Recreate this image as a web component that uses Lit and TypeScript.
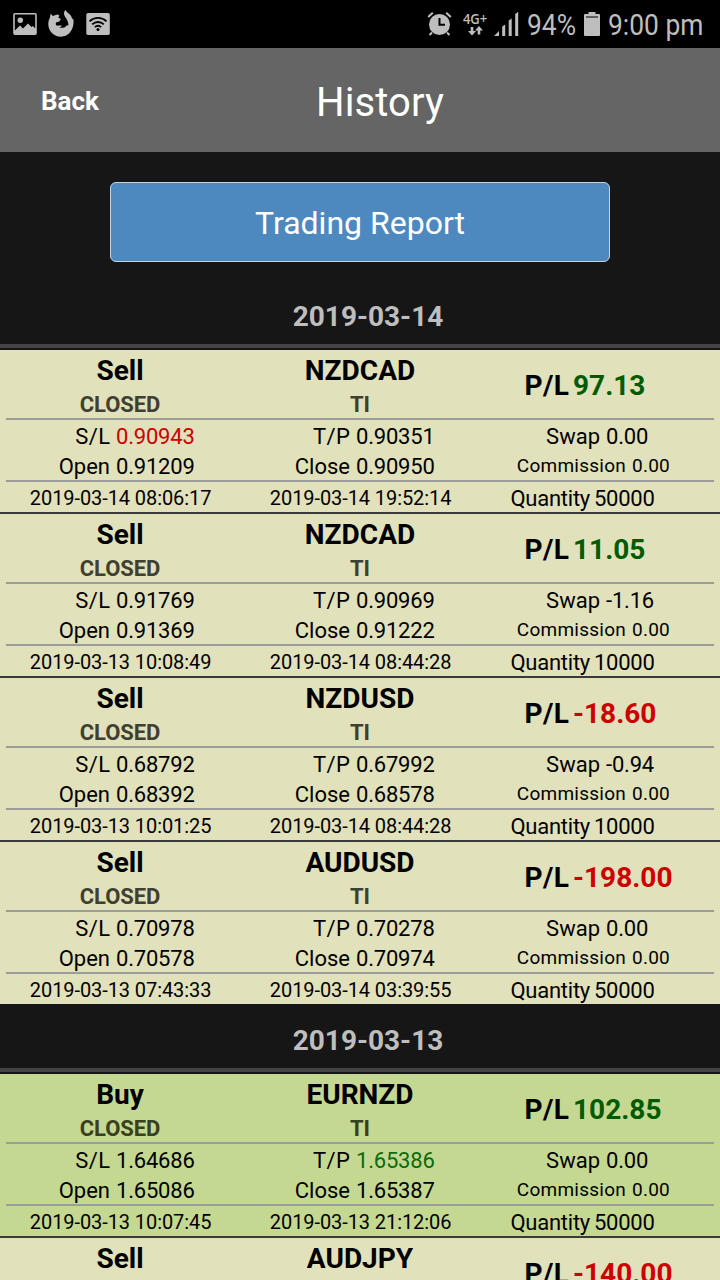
import { LitElement, html, css, nothing } from "lit";
import { customElement, property } from "lit/decorators.js";

interface Trade {
  side: "Sell" | "Buy";
  symbol: string;
  pl: string;
  detail?: {
    sl: string;
    tp: string;
    open: string;
    close: string;
    swap: string;
    opened: string;
    closed: string;
    quantity: string;
    hit?: "sl" | "tp";
  };
}

const DAYS: { date: string; trades: Trade[] }[] = [
  {
    date: "2019-03-14",
    trades: [
      { side: "Sell", symbol: "NZDCAD", pl: "97.13", detail: { sl: "0.90943", tp: "0.90351", open: "0.91209", close: "0.90950", swap: "0.00", opened: "2019-03-14 08:06:17", closed: "2019-03-14 19:52:14", quantity: "50000", hit: "sl" } },
      { side: "Sell", symbol: "NZDCAD", pl: "11.05", detail: { sl: "0.91769", tp: "0.90969", open: "0.91369", close: "0.91222", swap: "-1.16", opened: "2019-03-13 10:08:49", closed: "2019-03-14 08:44:28", quantity: "10000" } },
      { side: "Sell", symbol: "NZDUSD", pl: "-18.60", detail: { sl: "0.68792", tp: "0.67992", open: "0.68392", close: "0.68578", swap: "-0.94", opened: "2019-03-13 10:01:25", closed: "2019-03-14 08:44:28", quantity: "10000" } },
      { side: "Sell", symbol: "AUDUSD", pl: "-198.00", detail: { sl: "0.70978", tp: "0.70278", open: "0.70578", close: "0.70974", swap: "0.00", opened: "2019-03-13 07:43:33", closed: "2019-03-14 03:39:55", quantity: "50000" } },
    ],
  },
  {
    date: "2019-03-13",
    trades: [
      { side: "Buy", symbol: "EURNZD", pl: "102.85", detail: { sl: "1.64686", tp: "1.65386", open: "1.65086", close: "1.65387", swap: "0.00", opened: "2019-03-13 10:07:45", closed: "2019-03-13 21:12:06", quantity: "50000", hit: "tp" } },
      { side: "Sell", symbol: "AUDJPY", pl: "-140.00" },
    ],
  },
];

@customElement("status-bar")
class StatusBar extends LitElement {
  static styles = css`
    :host { display: flex; height: 48px; background: #000; color: #bebebe; align-items: center; padding: 0 16px 0 12px; box-sizing: border-box; }
    svg { display: block; fill: #bebebe; flex: none; }
    .left { display: flex; align-items: center; gap: 11px; flex: 1; }
    .right { display: flex; align-items: center; }
    .alarm { margin-right: 10px; }
    .net { width: 27px; margin-right: 5px; display: flex; flex-direction: column; align-items: center; }
    .gen { font: 600 14px/14px "Open Sans", sans-serif; white-space: nowrap; transform: scaleX(0.93); }
    .txt { font: 400 30px/48px Roboto, sans-serif; white-space: nowrap; padding-top: 1px; }
    .txt span { display: inline-block; transform: scaleX(0.88); transform-origin: 0 50%; }
    .pct { width: 49px; margin: 0 8px 0 8px; }
    .clock { width: 96px; margin-left: 8px; }
  `;
  render() {
    return html`
      <div class="left">
        <svg width="25" height="24" viewBox="0 0 25 24"><path fill-rule="evenodd" d="M3 1h20a1.800 1.800 0 0 1 1.800 1.800v18.400A1.800 1.800 0 0 1 23 23H3a1.800 1.800 0 0 1-1.800-1.800V2.800A1.800 1.800 0 0 1 3 1zM2.800 2.600V18.500L8 13.500l3 3 5-5 3.500 3.500 1.500-1 2.200 2.500V2.600z" /><circle cx="8.300" cy="8.300" r="2.700" /></svg>
        <svg width="27" height="28" viewBox="0 0 27 28"><path d="M2.700 3.500L4.700 6l4.600-1.500 2 .8-.9 2.400 2.500 1.400-1.600 2.500-3.300 1c-.5 1.600 0 2.500 1 3.100 2.500-.5 3.600 0 5-.1-.6 1-1.500 1.500-2.700 1.800 3.500 1.200 6.200-.2 7.600-2.200l1.400.400c.2-2.300-.5-4.600-1.900-6.800-1.400-2.500-2.400-3.500-2.400-5.300 0-1.500.5-2.600 1.600-3.500.6 1.600 1.900 2.600 3.600 3.800 1.500 1.500 2.500 3 3 5.200l.9-.4c.5 1.700.6 3.300.4 5C24.800 21.300 19.600 26.700 13 26.700 5.800 26.700.3 21 .3 14.200c0-2.700.6-4.500 1.500-6.200z" /></svg>
        <svg width="25" height="24" viewBox="0 0 25 24"><rect x="0.300" y="1" width="23.500" height="22" rx="1.800" /><g fill="none" stroke="#000" stroke-width="1.800"><path d="M3.500 9.300a12.500 12.500 0 0 1 17 0" /><path d="M6.200 12.300a8.500 8.500 0 0 1 11.600 0" /><path d="M8.800 15.200a4.800 4.800 0 0 1 6.400 0" /></g><circle cx="12" cy="17.500" r="1.500" fill="#000" /></svg>
      </div>
      <div class="right">
        <svg class="alarm" width="25" height="26" viewBox="0 0 25 26"><circle cx="12.500" cy="13.500" r="10.500" /><path d="M5 21.500L2.500 24M20 21.500l2.500 2.500M1.200 6l4.600-4.300M23.800 6l-4.600-4.300" stroke="#bebebe" stroke-width="2" /><path d="M12.500 7v6.700h5.500" fill="none" stroke="#000" stroke-width="2" /></svg>
        <div class="net">
          <span class="gen">4G+</span>
          <svg width="15" height="10" viewBox="0 0 15 10"><path d="M2.700 1h2.600v4H8L4 9.500 0 5h2.700zM9.700 8.500v-4H7L11 0l4 4.500h-2.700v4z" /></svg>
        </div>
        <svg width="25" height="26" viewBox="0 0 25 26"><path d="M0 25l5-5v5zM8.200 15.500l3-2V25h-3zM14.700 9.500l3-2V25h-3zM21.200 3l3-2.200V25h-3z" /></svg>
        <div class="txt pct"><span>94%</span></div>
        <svg width="16" height="24" viewBox="0 0 16 24"><path fill-rule="evenodd" d="M4.500 0h7v2H15a1 1 0 0 1 1 1v20a1 1 0 0 1-1 1H1a1 1 0 0 1-1-1V3a1 1 0 0 1 1-1h3.500zM2 4.500v1h12v-1z" /></svg>
        <div class="txt clock"><span>9:00 pm</span></div>
      </div>
    `;
  }
}

@customElement("trade-row")
class TradeRow extends LitElement {
  @property({ attribute: false }) trade!: Trade;

  static styles = css`
    :host { display: block; }
    .card { background: #e1e1bc; height: 162px; padding: 0 6px; color: #000; font: 400 22px/30px Roboto, sans-serif; white-space: nowrap; }
    .card.buy { background: #c5d892; }
    .cols { display: grid; grid-template-columns: 234px 240px 234px; box-sizing: border-box; }
    .head { height: 70px; padding-top: 1px; border-bottom: 2px solid #9c9c98; }
    .prices { height: 62px; border-bottom: 2px solid #9c9c98; padding-top: 2px; }
    .foot { height: 30px; padding-top: 1px; }
    .center { text-align: center; }
    .first.center { margin-left: -6px; }
    .big { font-size: 28px; line-height: 40px; font-weight: 700; }
    .sub { font-weight: 700; line-height: 28px; color: #3f3f32; letter-spacing: -0.1px; }
    .buy .sub { color: #384020; }
    .pair { display: grid; grid-template-columns: 110px auto; column-gap: 6px; }
    .pair > :first-child { text-align: right; }
    .num { letter-spacing: -0.2px; }
    .lead { letter-spacing: 0.4px; margin-right: -0.4px; }
    .c1 { grid-template-columns: 104px auto; }
    .p-swap { grid-template-columns: 120px auto; }
    .p-comm { grid-template-columns: 146px auto; font-size: 19px; line-height: 28px; letter-spacing: 0.25px; }
    .p-qty { grid-template-columns: 110px auto; column-gap: 4px; line-height: 32px; letter-spacing: -0.25px; }
    .p-pl { grid-template-columns: 89px auto; column-gap: 4px; font-size: 28px; line-height: 70px; font-weight: 700; }
    .date { font-size: 20px; letter-spacing: -0.08px; }
    .date span { position: relative; left: 0.6px; }
    .red { color: #cc0000; }
    .green { color: #005a00; }
    .mid-green { color: #0a6b0a; }
  `;
  render() {
    const t = this.trade;
    const d = t.detail;
    return html`
      <div class="card ${t.side === "Buy" ? "buy" : ""}">
        <div class="cols head">
          <div class="center first"><div class="big">${t.side}</div>${d ? html`<div class="sub">CLOSED</div>` : nothing}</div>
          <div class="center"><div class="big">${t.symbol}</div>${d ? html`<div class="sub">TI</div>` : nothing}</div>
          <div class="pair p-pl"><span class="lead">P/L</span><span class=${t.pl.startsWith("-") ? "red" : "green"}>${t.pl}</span></div>
        </div>
        ${d
          ? html`
              <div class="cols prices">
                <div>
                  <div class="pair c1"><span class="lead">S/L</span><span class="num ${d.hit === "sl" ? "red" : ""}">${d.sl}</span></div>
                  <div class="pair c1"><span>Open</span><span class="num">${d.open}</span></div>
                </div>
                <div>
                  <div class="pair"><span class="lead">T/P</span><span class="num ${d.hit === "tp" ? "mid-green" : ""}">${d.tp}</span></div>
                  <div class="pair"><span>Close</span><span class="num">${d.close}</span></div>
                </div>
                <div>
                  <div class="pair p-swap"><span>Swap</span><span class="num">${d.swap}</span></div>
                  <div class="pair p-comm"><span>Commission</span><span>0.00</span></div>
                </div>
              </div>
              <div class="cols foot">
                <div class="center first date"><span>${d.opened}</span></div>
                <div class="center date"><span>${d.closed}</span></div>
                <div class="pair p-qty"><span>Quantity</span><span>${d.quantity}</span></div>
              </div>
            `
          : nothing}
      </div>
    `;
  }
}

@customElement("app-root")
class AppRoot extends LitElement {
  static styles = css`
    :host { display: block; height: 1280px; overflow: hidden; background: #161616; font-family: Roboto, sans-serif; }
    .bar { display: grid; grid-template-columns: 140px 1fr 100px; height: 104px; background: #656565; color: #fff; align-items: center; }
    .back { font-size: 26px; font-weight: 700; text-align: center; line-height: 30px; padding-top: 2px; }
    .title { font-size: 40px; line-height: 50px; text-align: center; padding-top: 6px; letter-spacing: 0.1px; }
    .report { display: flex; justify-content: center; padding: 30px 0 18px; }
    .button { box-sizing: border-box; width: 500px; height: 80px; border: 1px solid #c9d3dc; border-radius: 6px; background: #4d89bf; color: #fff; font: 400 32px/78px Roboto, sans-serif; padding: 1px 0 0; }
    .day { box-sizing: border-box; height: 70px; border-bottom: 2px solid #161616; padding-left: 16px; text-align: center; color: #bebebe; font-size: 28px; font-weight: 700; line-height: 74px; background: linear-gradient(#444, #444) 0 100% / 100% 4px no-repeat; }
    .list { display: flex; flex-direction: column; gap: 2px; background: #3a3a3a; }
  `;
  render() {
    return html`
      <status-bar></status-bar>
      <div class="bar"><div class="back">Back</div><div class="title">History</div></div>
      <div class="report"><button class="button">Trading Report</button></div>
      ${DAYS.map(
        (d) => html`
          <div class="day">${d.date}</div>
          <div class="list">${d.trades.map((t) => html`<trade-row .trade=${t}></trade-row>`)}</div>
        `,
      )}
    `;
  }
}
